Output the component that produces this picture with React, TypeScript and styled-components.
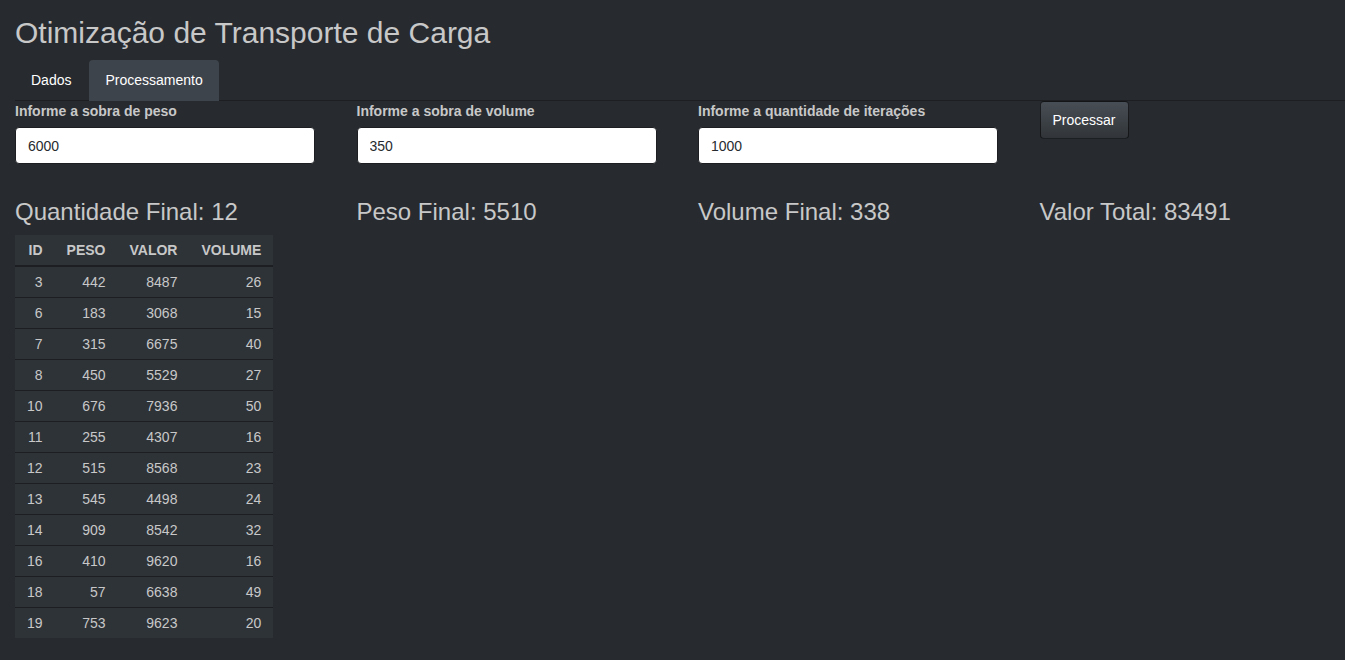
import React from "react";
import styled, { createGlobalStyle } from "styled-components";

const Global = createGlobalStyle`
  html, body { margin: 0; padding: 0; }
  body {
    background: #272b30;
    color: #c8c8c8;
    font-family: "Liberation Sans", Arial, sans-serif;
    font-size: 14px;
    line-height: 20px;
  }
  * { box-sizing: border-box; }
`;

const Page = styled.div`
  padding: 0 0 0 15px;
`;

const Title = styled.h2`
  font-size: 30px;
  font-weight: 400;
  line-height: 33px;
  margin: 16px 0 11px;
  color: #c8c8c8;
`;

const Tabs = styled.nav`
  display: flex;
  border-bottom: 1px solid #1c1e22;
  height: 41px;
`;

const Tab = styled.a<{ $active?: boolean }>`
  display: block;
  padding: 10px 16px;
  line-height: 20px;
  margin-right: 2px;
  border-radius: 4px 4px 0 0;
  color: #fff;
  text-decoration: none;
  background: ${(p) => (p.$active ? "#3e444c" : "transparent")};
  height: 41px;
`;

const Grid = styled.div`
  display: grid;
  grid-template-columns: repeat(4, 341.5px);
  align-items: start;
`;

const Field = styled.div`
  display: flex;
  flex-direction: column;
  margin-bottom: 15px;
`;

const Label = styled.label`
  font-weight: 700;
  font-size: 14px;
  line-height: 20px;
  margin-bottom: 6px;
  color: #c8c8c8;
`;

const Input = styled.input`
  width: 300px;
  height: 37px;
  padding: 8px 12px;
  font-family: inherit;
  font-size: 14px;
  color: #272b30;
  background: #fff;
  border: 1px solid #1c1e22;
  border-radius: 4px;
  outline: none;
`;

const Button = styled.button`
  justify-self: start;
  height: 38px;
  padding: 8px 12px;
  font-family: inherit;
  font-size: 14px;
  line-height: 20px;
  color: #fff;
  background: linear-gradient(#484e55, #3a3f44 60%, #313539);
  border: 1px solid rgba(0, 0, 0, 0.6);
  border-radius: 4px;
`;

const Stat = styled.h3`
  font-size: 24px;
  font-weight: 400;
  line-height: 26px;
  margin: 20px 0 10px;
  color: #c8c8c8;
`;

const Table = styled.table`
  border-collapse: collapse;
  background: #2e3338;
`;

const Th = styled.th`
  padding: 5px 12px;
  text-align: right;
  font-weight: 700;
  line-height: 20px;
  border-bottom: 2px solid #1c1e22;
  color: #c8c8c8;
`;

const Td = styled.td`
  padding: 5px 12px;
  text-align: right;
  line-height: 20px;
  border-top: 1px solid #1c1e22;
`;

const rows = [
  [3, 442, 8487, 26],
  [6, 183, 3068, 15],
  [7, 315, 6675, 40],
  [8, 450, 5529, 27],
  [10, 676, 7936, 50],
  [11, 255, 4307, 16],
  [12, 515, 8568, 23],
  [13, 545, 4498, 24],
  [14, 909, 8542, 32],
  [16, 410, 9620, 16],
  [18, 57, 6638, 49],
  [19, 753, 9623, 20],
];

export default function App() {
  return (
    <Page>
      <Global />
      <Title>Otimização de Transporte de Carga</Title>
      <Tabs>
        <Tab href="#">Dados</Tab>
        <Tab href="#" $active>
          Processamento
        </Tab>
      </Tabs>
      <Grid>
        <Field>
          <Label>Informe a sobra de peso</Label>
          <Input defaultValue="6000" />
        </Field>
        <Field>
          <Label>Informe a sobra de volume</Label>
          <Input defaultValue="350" />
        </Field>
        <Field>
          <Label>Informe a quantidade de iterações</Label>
          <Input defaultValue="1000" />
        </Field>
        <Button>Processar</Button>
      </Grid>
      <Grid>
        <div>
          <Stat>Quantidade Final: 12</Stat>
          <Table>
            <thead>
              <tr>
                <Th>ID</Th>
                <Th>PESO</Th>
                <Th>VALOR</Th>
                <Th>VOLUME</Th>
              </tr>
            </thead>
            <tbody>
              {rows.map((r) => (
                <tr key={r[0]}>
                  {r.map((v, i) => (
                    <Td key={i}>{v}</Td>
                  ))}
                </tr>
              ))}
            </tbody>
          </Table>
        </div>
        <Stat>Peso Final: 5510</Stat>
        <Stat>Volume Final: 338</Stat>
        <Stat>Valor Total: 83491</Stat>
      </Grid>
    </Page>
  );
}
